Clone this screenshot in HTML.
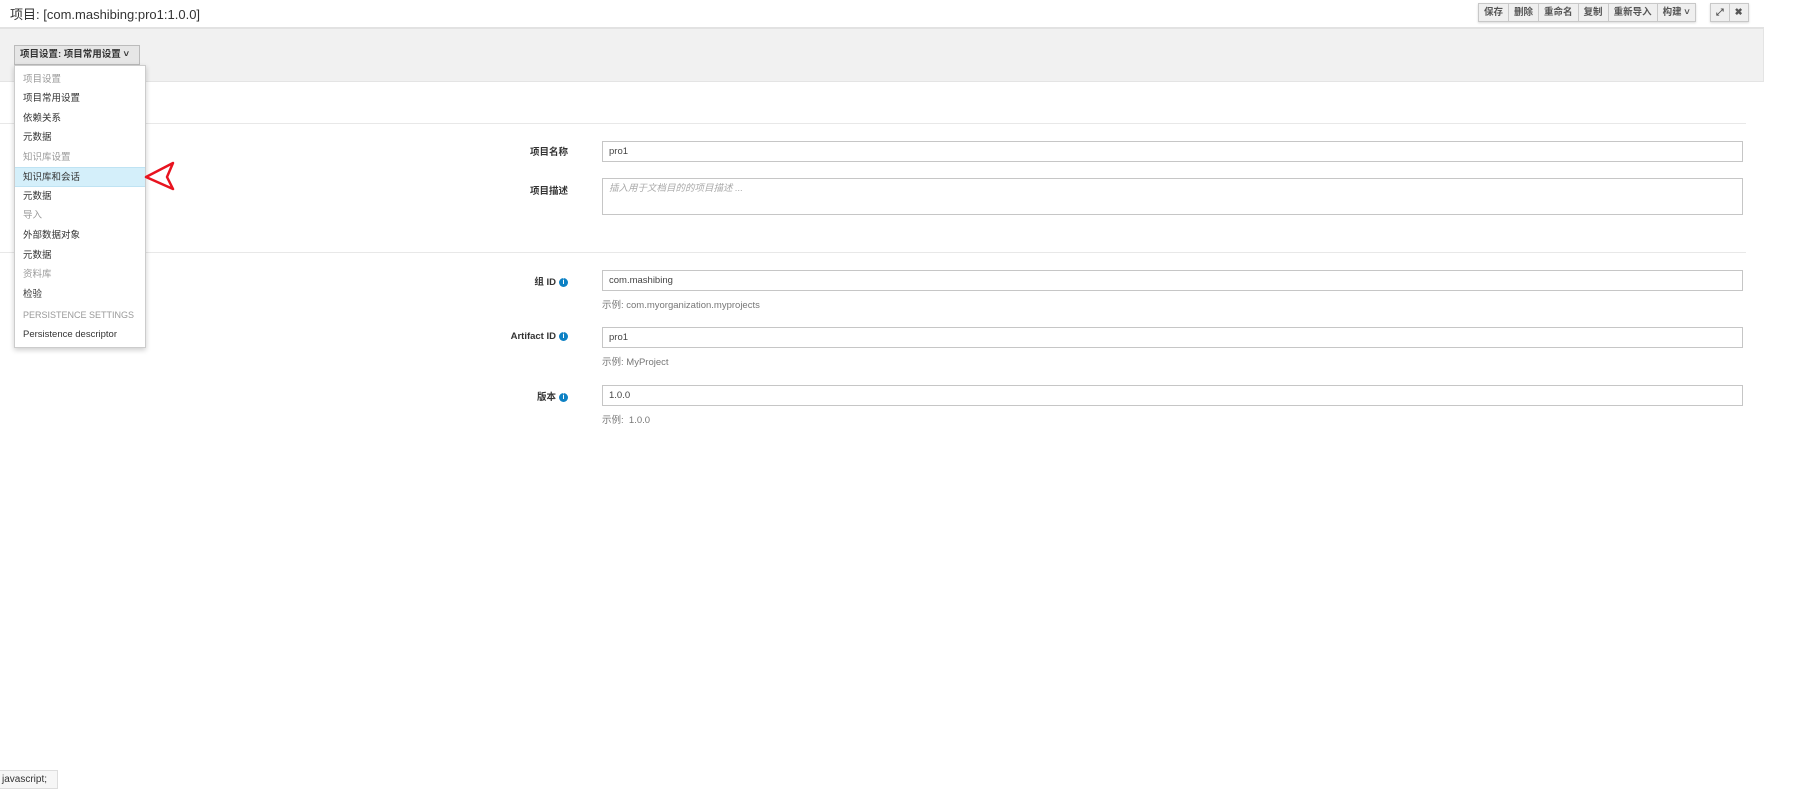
<!DOCTYPE html>
<html><head><meta charset="utf-8"><style>
*{margin:0;padding:0;box-sizing:border-box}
body{width:1806px;height:810px;background:#fff;font-family:"Liberation Sans","Noto Sans CJK SC",sans-serif;position:relative;overflow:hidden;color:#363636}
.a{position:absolute}
.title{left:10px;top:4px;font-size:13px;color:#333}
.bar{left:0;top:27px;width:1764px;height:55px;background:#f1f1f1;border-top:2px solid #e2e2e2;border-bottom:1px solid #e4e4e4;border-right:1px solid #e4e4e4}
.tb{top:3px;height:19px;display:flex;border:1px solid #c8c8c8;background:#efefef;box-shadow:0 1px 2px rgba(0,0,0,.15)}
.tb span{font-size:9.5px;font-weight:bold;color:#555;padding:0 5px;line-height:17px;border-right:1px solid #c8c8c8}
.tb span:last-child{border-right:none}
.dd{left:14px;top:45px;width:126px;height:20px;background:#e6e6e6;border:1px solid #bbb;font-size:9.5px;font-weight:bold;line-height:18px;padding-left:5px;color:#333;white-space:nowrap}
.menu{left:14px;top:65px;width:132px;height:283px;background:#fff;border:1px solid #ccc;box-shadow:0 2px 5px rgba(0,0,0,.2)}
.mi{position:absolute;left:0;width:130px;height:20px;font-size:9.5px;line-height:20px;padding-left:8px;color:#333;white-space:nowrap}
.mi.h{color:#9a9a9a}
.mi.s{background:#d4effa;border-top:1px solid #bfe3f3;border-bottom:1px solid #bfe3f3}
.line{height:1px;background:#e8e8e8;left:0;width:1746px}
.lbl{font-size:9.5px;font-weight:bold;color:#333;text-align:right;right:1238px;white-space:nowrap}
.inp{left:602px;width:1141px;height:21px;border:1px solid #c6c6c6;font-size:9.5px;line-height:19px;padding-left:6px;color:#444}
.hint{left:602px;font-size:9.5px;color:#777}
.i{display:inline-block;width:9px;height:9px;border-radius:50%;background:#0d81c4;color:#fff;font-size:7px;line-height:9px;text-align:center;vertical-align:middle;margin-left:3px;font-weight:bold}
</style></head><body>
<div class="a title">项目: [com.mashibing:pro1:1.0.0]</div>
<div class="a tb" style="left:1478px"><span>保存</span><span>删除</span><span>重命名</span><span>复制</span><span>重新导入</span><span>构建 ˅</span></div>
<div class="a tb" style="left:1710px"><span>⤢</span><span>✖</span></div>
<div class="a bar"></div>
<div class="a dd">项目设置: 项目常用设置 ˅</div>
<div class="a line" style="top:123px"></div>
<div class="a line" style="top:252px"></div>
<div class="a lbl" style="top:144px">项目名称</div>
<div class="a inp" style="top:141px">pro1</div>
<div class="a lbl" style="top:183px">项目描述</div>
<div class="a inp" style="top:178px;height:37px;color:#aaa;font-style:italic">插入用于文档目的的项目描述 ...</div>
<div class="a lbl" style="top:274px">组 ID<span class="i">i</span></div>
<div class="a inp" style="top:270px">com.mashibing</div>
<div class="a hint" style="top:297px">示例: com.myorganization.myprojects</div>
<div class="a lbl" style="top:331px">Artifact ID<span class="i">i</span></div>
<div class="a inp" style="top:327px">pro1</div>
<div class="a hint" style="top:354px">示例: MyProject</div>
<div class="a lbl" style="top:389px">版本<span class="i">i</span></div>
<div class="a inp" style="top:385px">1.0.0</div>
<div class="a hint" style="top:412px">示例:&nbsp; 1.0.0</div>
<div class="a menu">
<div class="mi h" style="top:4px">项目设置</div>
<div class="mi" style="top:23px">项目常用设置</div>
<div class="mi" style="top:43px">依赖关系</div>
<div class="mi" style="top:62px">元数据</div>
<div class="mi h" style="top:82px">知识库设置</div>
<div class="mi s" style="top:101px">知识库和会话</div>
<div class="mi" style="top:121px">元数据</div>
<div class="mi h" style="top:140px">导入</div>
<div class="mi" style="top:160px">外部数据对象</div>
<div class="mi" style="top:180px">元数据</div>
<div class="mi h" style="top:199px">资料库</div>
<div class="mi" style="top:219px">检验</div>
<div class="mi h" style="top:239px;font-size:9px">PERSISTENCE SETTINGS</div>
<div class="mi" style="top:259px">Persistence descriptor</div>
</div>
<svg class="a" style="left:140px;top:158px" width="40" height="36"><path d="M6 19 L33 5 L27 19 L33 31 Z" fill="none" stroke="#e8131f" stroke-width="2.5" stroke-linejoin="round"/></svg>
<div class="a" style="left:0;top:770px;width:58px;height:19px;background:#f6f6f6;border:1px solid #ddd;border-left:none;font-size:10px;line-height:17px;padding-left:2px;color:#333">javascript;</div>
</body></html>
